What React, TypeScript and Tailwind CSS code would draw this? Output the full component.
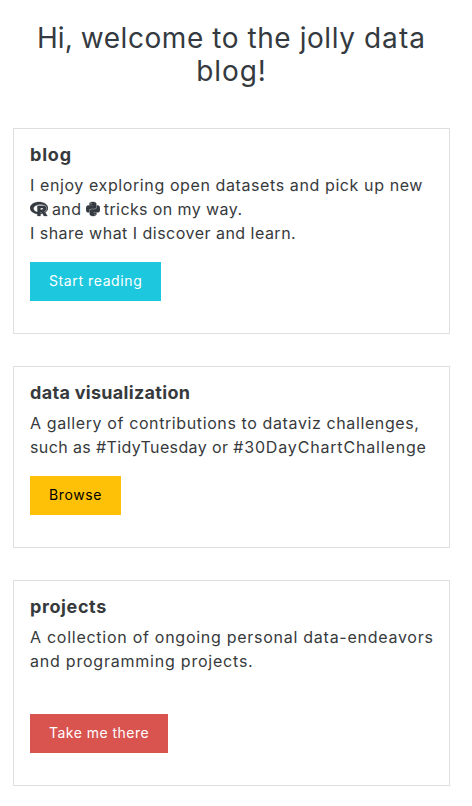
import type { ReactNode } from "react";
import { FaPython, FaRProject } from "react-icons/fa";

function Line({ className = "", children }: { className?: string; children: ReactNode }) {
  return <span className={`block whitespace-nowrap ${className}`}>{children}</span>;
}

function Card({ title, titleClass, className, children }: { title: string; titleClass: string; className: string; children: ReactNode }) {
  return (
    <section className={`flex flex-col items-start border border-[#dfdfdf] px-4 pt-[15px] ${className}`}>
      <h2 className={`mb-2 h-[21px] text-lg leading-[21px] font-bold ${titleClass}`}>{title}</h2>
      {children}
    </section>
  );
}

function Button({ className, children }: { className: string; children: ReactNode }) {
  return (
    <a href="#" className={`flex h-[39px] items-center pb-px pl-[19px] text-sm whitespace-nowrap ${className}`}>
      {children}
    </a>
  );
}

export default function App() {
  return (
    <main className="h-[806px] bg-white pr-[22px] pl-[13px] pt-[22px] font-['Inter','Liberation_Sans',sans-serif] text-[#373a3c]">
      <h1 className="mb-10 h-[66px] text-center text-[28px] leading-[33px] text-[#343a40]">
        <Line className="tracking-[0.56px]">
          <span className="tracking-[0.06px]">Hi, </span>welcome to the jolly <span className="tracking-[1.06px]">data</span>
        </Line>
        <Line className="tracking-[0.9px]">blog!</Line>
      </h1>
      <div className="flex flex-col gap-8">
        <Card title="blog" titleClass="tracking-[0.8px]" className="h-[206px]">
          <p className="mb-[17px] text-base leading-6">
            <Line className="tracking-[0.6px]">I enjoy exploring open datasets and pick up new</Line>
            <Line className="tracking-[0.35px]">
              <FaRProject className="inline h-4 w-[18px] stroke-current stroke-[10] align-[-2px] text-[#343a40]" />
              <span className="pl-1">and</span>
              <FaPython className="mr-[4px] ml-[4.5px] inline h-4 w-[14px] stroke-current stroke-[12] align-[-2px] text-[#343a40]" />
              <span className="tracking-[0.4px]">tricks on my way.</span>
            </Line>
            <Line className="tracking-[0.48px]">I share what I discover and learn.</Line>
          </p>
          <Button className="w-[131px] bg-[#1dc7de] tracking-[0.6px] text-white">Start reading</Button>
        </Card>
        <Card title="data visualization" titleClass="tracking-[0.3px]" className="h-[182px]">
          <p className="mb-[17px] text-base leading-6">
            <Line className="tracking-[0.61px]">A gallery of contributions to dataviz challenges,</Line>
            <Line className="tracking-[0.38px]">
              such as #TidyTuesday or <span className="tracking-[0.83px]">#30DayChartChallenge</span>
            </Line>
          </p>
          <Button className="w-[91px] bg-[#ffc107] tracking-[0.6px] text-black">Browse</Button>
        </Card>
        <Card title="projects" titleClass="tracking-[0.6px]" className="h-[206px]">
          <p className="mb-[41px] text-base leading-6">
            <Line className="tracking-[0.73px]">A collection of ongoing personal data-endeavors</Line>
            <Line className="tracking-[0.78px]">and programming projects.</Line>
          </p>
          <Button className="w-[138px] bg-[#d9534f] tracking-[0.48px] text-white">Take me there</Button>
        </Card>
      </div>
    </main>
  );
}
